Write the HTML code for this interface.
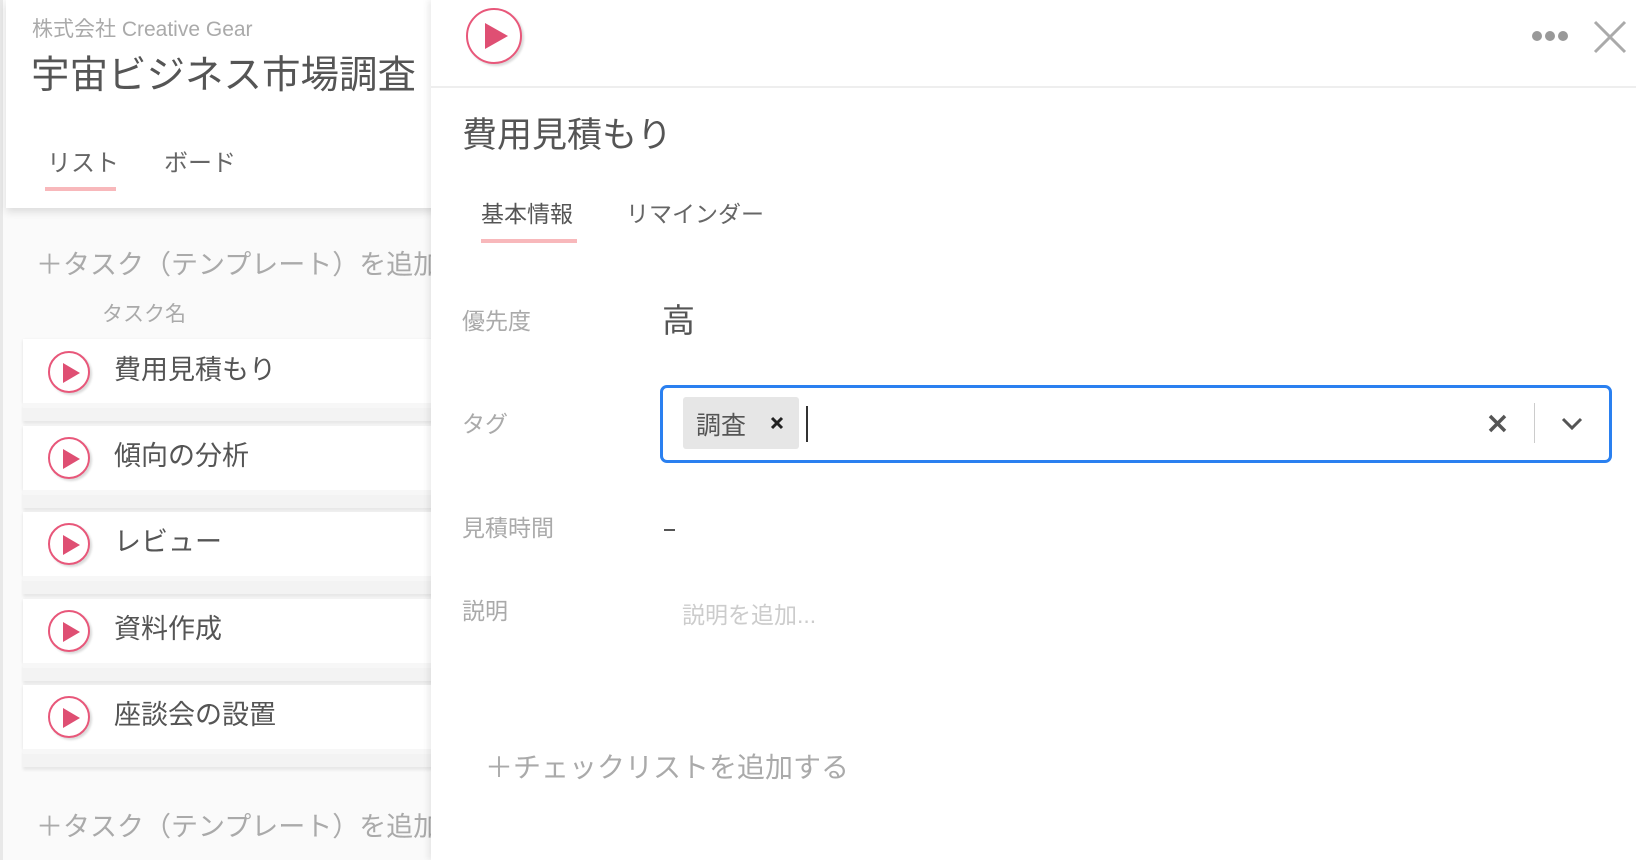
<!DOCTYPE html>
<html><head><meta charset="utf-8"><style>
*{margin:0;padding:0;box-sizing:border-box}
body{width:1636px;height:860px;overflow:hidden;background:#fff;position:relative;font-family:"Liberation Sans","Noto Sans CJK JP",sans-serif;color:#555}
.a{position:absolute;white-space:nowrap}
.left{position:absolute;left:0;top:0;width:440px;height:860px;background:#fafafa;border-left:3px solid #e8e8e8}
.hdr{position:absolute;left:3px;top:0;width:437px;height:208px;background:#fff;box-shadow:0 4px 8px rgba(0,0,0,.12)}
.card{position:absolute;left:23px;width:420px;height:64px;background:#fff;box-shadow:0 1px 3px rgba(0,0,0,.1)}
.band{position:absolute;left:23px;width:420px;height:18px;background:#f3f3f3;border-top:5px solid #f7f7f7;box-shadow:0 3px 3px rgba(0,0,0,.08)}
.ic{position:absolute;width:42px;height:42px;border:2px solid #e8577a;border-radius:50%;background:#fff;box-shadow:2px 2px 2px rgba(0,0,0,.15)}
.ic:after{content:"";position:absolute;left:13px;top:10px;border-left:17px solid #df4f73;border-top:10px solid transparent;border-bottom:10px solid transparent}
.ic.big:after{left:17px;top:13px;border-left:23px solid #df4f73;border-top:13px solid transparent;border-bottom:13px solid transparent}
.rt{position:absolute;left:431px;top:0;width:1205px;height:860px;background:#fff;box-shadow:-3px 0 6px rgba(0,0,0,.08)}
.lbl{position:absolute;left:31px;font-size:23px;color:#aaa}
</style></head><body>
<div class="left">
<div class="hdr">
<div class="a" style="left:26px;top:13px;font-size:21px;color:#aaa">株式会社 Creative Gear</div>
<div class="a" style="left:25px;top:44px;font-size:38.5px;color:#555">宇宙ビジネス市場調査</div>
<div class="a" style="left:41px;top:143px;font-size:24px;color:#666">リスト</div>
<div class="a" style="left:39px;top:187px;width:71px;height:4px;background:#f8b8bb"></div>
<div class="a" style="left:158px;top:143px;font-size:24px;color:#666">ボード</div>
</div>
<div class="a" style="left:33px;top:243px;font-size:27px;color:#aaa">＋タスク（テンプレート）を追加</div>
<div class="a" style="left:99px;top:298px;font-size:21px;color:#aaa">タスク名</div>
<div class="a" style="left:33px;top:805px;font-size:27px;color:#aaa">＋タスク（テンプレート）を追加</div>
</div>
<div class="card" style="top:339px"></div><div class="band" style="top:403px"></div>
<div class="card" style="top:426px"></div><div class="band" style="top:490px"></div>
<div class="card" style="top:512px"></div><div class="band" style="top:576px"></div>
<div class="card" style="top:599px"></div><div class="band" style="top:663px"></div>
<div class="card" style="top:685px"></div><div class="band" style="top:749px"></div>
<div class="ic" style="left:48px;top:351px"></div><div class="a" style="left:114px;top:348px;font-size:27px">費用見積もり</div>
<div class="ic" style="left:48px;top:437px"></div><div class="a" style="left:114px;top:434px;font-size:27px">傾向の分析</div>
<div class="ic" style="left:48px;top:523px"></div><div class="a" style="left:114px;top:520px;font-size:27px">レビュー</div>
<div class="ic" style="left:48px;top:610px"></div><div class="a" style="left:114px;top:607px;font-size:27px">資料作成</div>
<div class="ic" style="left:48px;top:696px"></div><div class="a" style="left:114px;top:693px;font-size:27px">座談会の設置</div>
<div class="rt">
<div class="ic big" style="left:35px;top:8px;width:56px;height:56px"></div>
<div class="a" style="left:0;top:86px;width:1205px;height:2px;background:#eee"></div>
<div class="a" style="left:1101px;top:31px;width:10px;height:10px;border-radius:50%;background:#999;box-shadow:13px 0 #999,26px 0 #999"></div>
<svg class="a" style="left:1162px;top:20px" width="34" height="34"><path d="M2 2L32 32M32 2L2 32" stroke="#aaa" stroke-width="3"/></svg>
<div class="a" style="left:31px;top:107px;font-size:35px;color:#555">費用見積もり</div>
<div class="a" style="left:50px;top:195px;font-size:23px;color:#555">基本情報</div>
<div class="a" style="left:50px;top:239px;width:96px;height:4px;background:#f8b8bb"></div>
<div class="a" style="left:195px;top:195px;font-size:23px;color:#666">リマインダー</div>
<div class="lbl" style="top:302px">優先度</div>
<div class="a" style="left:231px;top:294px;font-size:33px;color:#555">高</div>
<div class="lbl" style="top:405px">タグ</div>
<div class="a" style="left:229px;top:385px;width:952px;height:78px;border:3px solid #2a80f0;border-radius:7px"></div>
<div class="a" style="left:252px;top:397px;width:116px;height:52px;background:#e6e6e6;border-radius:3px"></div>
<div class="a" style="left:265px;top:406px;font-size:25px;color:#555">調査</div>
<svg class="a" style="left:339px;top:416px" width="14" height="14"><path d="M2 2L12 12M12 2L2 12" stroke="#222" stroke-width="3"/></svg>
<div class="a" style="left:375px;top:406px;width:2px;height:36px;background:#333"></div>
<svg class="a" style="left:1057px;top:414px" width="19" height="19"><path d="M2 2L17 17M17 2L2 17" stroke="#555" stroke-width="3.5"/></svg>
<div class="a" style="left:1103px;top:403px;width:1px;height:40px;background:#ccc"></div>
<svg class="a" style="left:1130px;top:417px" width="22" height="14"><path d="M2 2L11 11L20 2" stroke="#555" stroke-width="3" fill="none"/></svg>
<div class="lbl" style="top:509px">見積時間</div>
<div class="a" style="left:233px;top:529px;width:11px;height:2px;background:#555"></div>
<div class="lbl" style="top:592px">説明</div>
<div class="a" style="left:251px;top:596px;font-size:23px;color:#ccc">説明を追加...</div>
<div class="a" style="left:54px;top:746px;font-size:28px;color:#aaa">＋チェックリストを追加する</div>
</div>
</body></html>
